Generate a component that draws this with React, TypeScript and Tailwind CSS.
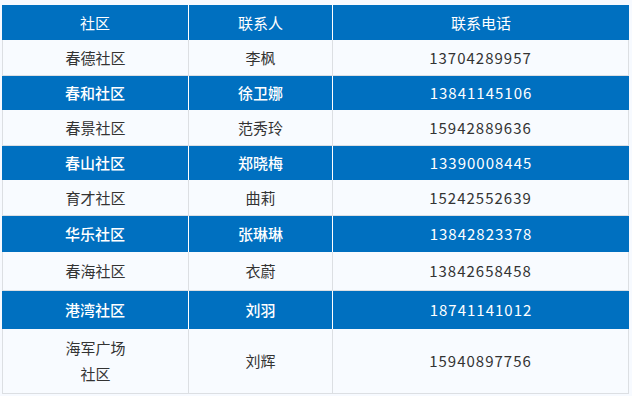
const rows = [
    { name: ["春德社区"], person: "李枫", phone: "13704289957", blue: false, h: "h-[36px]" },
    { name: ["春和社区"], person: "徐卫娜", phone: "13841145106", blue: true, h: "h-[34px]" },
    { name: ["春景社区"], person: "范秀玲", phone: "15942889636", blue: false, h: "h-[36px]" },
    { name: ["春山社区"], person: "郑晓梅", phone: "13390008445", blue: true, h: "h-[34px]" },
    { name: ["育才社区"], person: "曲莉", phone: "15242552639", blue: false, h: "h-[36px]" },
    { name: ["华乐社区"], person: "张琳琳", phone: "13842823378", blue: true, h: "h-[36px]" },
    { name: ["春海社区"], person: "衣蔚", phone: "13842658458", blue: false, h: "h-[39px]" },
    { name: ["港湾社区"], person: "刘羽", phone: "18741141012", blue: true, h: "h-[38px]" },
    { name: ["海军广场", "社区"], person: "刘辉", phone: "15940897756", blue: false, h: "h-[65px]" },
];

const App = () => {
    return (
        <div className="w-[632px] h-[396px] bg-[#f7faff] pt-[5px] pl-[2px] font-['Noto_Sans_CJK_SC',sans-serif] text-[15px] leading-[26px]">
            <div className="w-[627px] flex flex-col">
                <div className="grid grid-cols-[187px_144px_296px] h-[35px] bg-[#0070c0] text-white">
                    <div className="flex items-center justify-center border-r border-white">社区</div>
                    <div className="flex items-center justify-center border-r border-white">联系人</div>
                    <div className="flex items-center justify-center">联系电话</div>
                </div>
                {rows.map((r) => (
                    <div
                        key={r.phone}
                        className={`grid grid-cols-[187px_144px_296px] ${r.h} ${r.blue ? "bg-[#0070c0] text-white" : "bg-[#f8fbff] text-[#333333] border-b border-[#dcdfe3]"}`}
                    >
                        <div className={`flex flex-col items-center justify-center border-r ${r.blue ? "border-white font-medium" : "border-[#dcdfe3] border-l"}`}>
                            {r.name.map((n) => (
                                <span key={n}>{n}</span>
                            ))}
                        </div>
                        <div className={`flex items-center justify-center border-r ${r.blue ? "border-white font-medium" : "border-[#dcdfe3]"}`}>{r.person}</div>
                        <div className={`flex items-center justify-center tracking-[1px] ${r.blue ? "" : "border-r border-[#dcdfe3]"}`}>{r.phone}</div>
                    </div>
                ))}
            </div>
        </div>
    );
};

export default App;
